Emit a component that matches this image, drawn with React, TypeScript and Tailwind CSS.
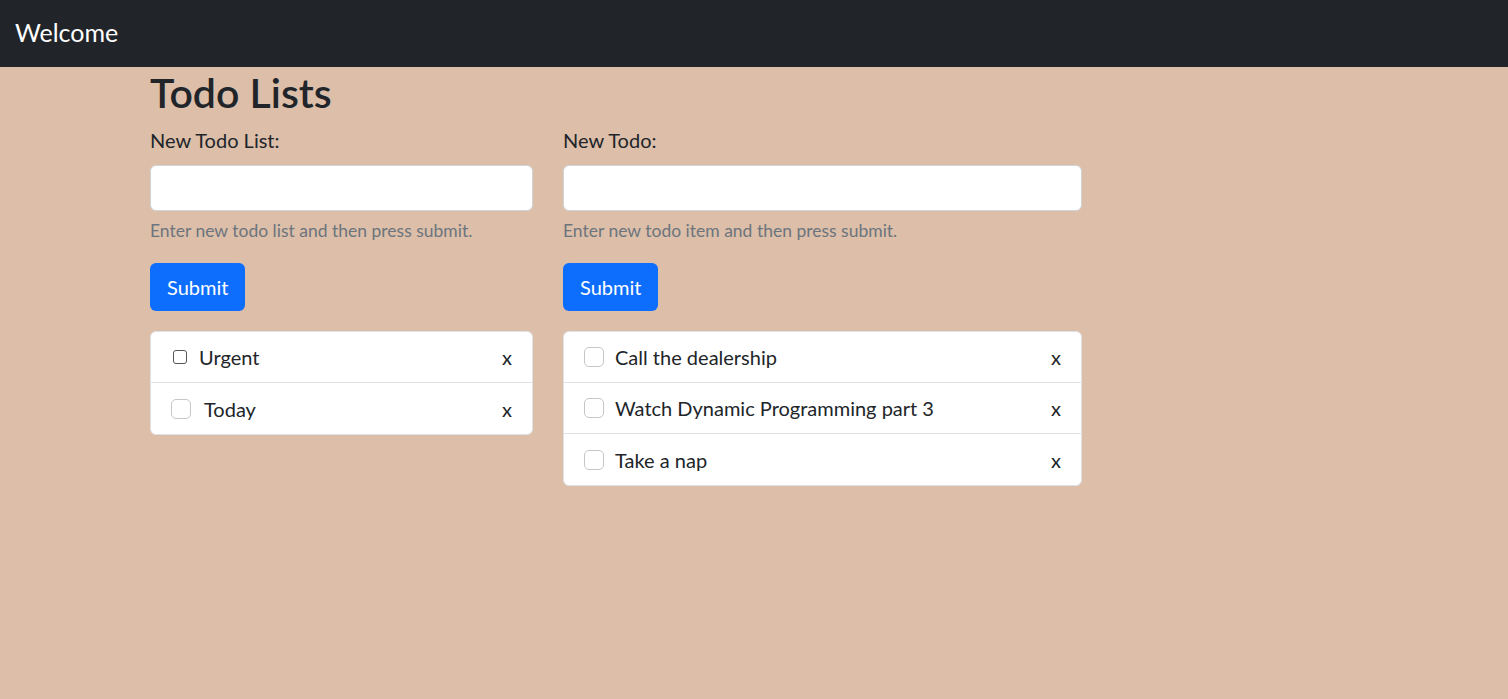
import React from "react";

const font = { fontFamily: "Lato, 'Noto Sans', sans-serif" };

function Box({ native }: { native?: boolean }) {
  if (native)
    return <span className="inline-block w-[14px] h-[14px] border border-[#555] rounded-[3px] bg-white mr-[12px] ml-[2px]" />;
  return <span className="inline-block w-[20px] h-[20px] border border-[#c6c6c6] rounded-[5px] bg-white mr-[11px]" />;
}

function Row({ text, native, last, extra }: { text: string; native?: boolean; last?: boolean; extra?: boolean }) {
  return (
    <div className={`flex items-center h-[51px] pl-[20px] pr-[20px] ${last ? "" : "border-b border-[#dee2e6]"}`}>
      <Box native={native} />
      <span className={`flex-1 text-[20px] text-[#212529] ${extra ? "ml-[2px]" : ""}`}>{text}</span>
      <span className="text-[20px] text-[#212529]">x</span>
    </div>
  );
}

function Form({ label, help }: { label: string; help: string }) {
  return (
    <div>
      <div className="text-[20px] text-[#212529] leading-[30px]">{label}</div>
      <div className="mt-[10px] h-[46px] bg-white border border-[#ced4da] rounded-[6px]" />
      <div className="mt-[7px] text-[17.5px] text-[#6c757d] leading-[26px]">{help}</div>
      <button className="mt-[19px] h-[48px] px-[17px] bg-[#0d6efd] text-white text-[20px] rounded-[6px]">Submit</button>
    </div>
  );
}

export default function App() {
  return (
    <div style={font} className="min-h-[699px] bg-[#dcbea9]">
      <div className="h-[67px] bg-[#212529] flex items-center pl-[15px] pb-[1px]">
        <span className="text-white text-[25px]">Welcome</span>
      </div>
      <div className="pl-[150px]">
        <h1 className="text-[41px] font-semibold text-[#212529] leading-[52px] mt-0">Todo Lists</h1>
        <div className="flex gap-[30px] mt-[6px]">
          <div className="w-[383px]">
            <Form label="New Todo List:" help="Enter new todo list and then press submit." />
            <div className="mt-[20px] bg-white border border-[#dee2e6] rounded-[6px]">
              <Row text="Urgent" native />
              <Row text="Today" last extra />
            </div>
          </div>
          <div className="w-[519px]">
            <Form label="New Todo:" help="Enter new todo item and then press submit." />
            <div className="mt-[20px] bg-white border border-[#dee2e6] rounded-[6px]">
              <Row text="Call the dealership" />
              <Row text="Watch Dynamic Programming part 3" />
              <Row text="Take a nap" last />
            </div>
          </div>
        </div>
      </div>
    </div>
  );
}
